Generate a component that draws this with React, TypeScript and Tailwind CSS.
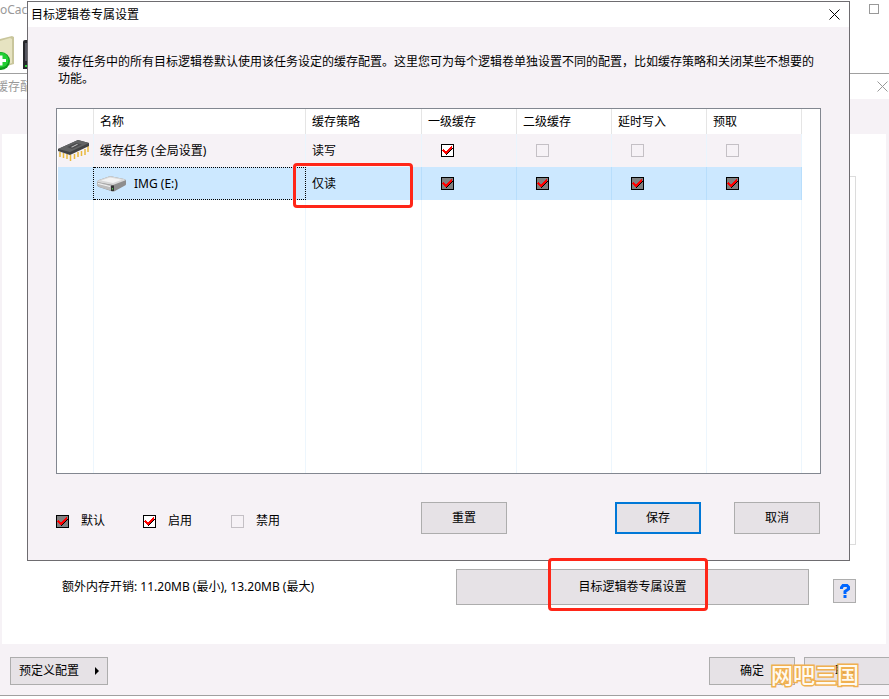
import React from "react";

type Mark = "default" | "on" | "off";

function Tick({ mark, label }: { mark: Mark; label: string }) {
  const look =
    mark === "default"
      ? "border-black bg-[#808080]"
      : mark === "on"
        ? "border-black bg-white"
        : "border-[#c4c0c5] bg-transparent";
  return (
    <span className="grid size-[13px] shrink-0">
      <input
        type="checkbox"
        aria-label={label}
        defaultChecked={mark !== "off"}
        className={"col-start-1 row-start-1 size-[13px] appearance-none border " + look}
      />
      {mark !== "off" && (
        <svg viewBox="0 0 13 13" shapeRendering="crispEdges" className="pointer-events-none col-start-1 row-start-1 size-[13px]">
          <path d="M2 6h1v1h1v1h1v1h1v-1h1v-1h1v-1h1v-1h1v-1h2v1h-1v1h-1v1h-1v1h-1v1h-1v1h-1v1h-1v-1h-1v-1h-1v-1h-1v-1h-1z" fill="#000" />
          <path d="M2 5h1v1h1v1h2v-1h1v-1h1v-1h1v-1h1v-1h1v3h-1v1h-1v1h-1v1h-1v1h-1v1h-2v-1h-1v-1h-1v-1h-1z" fill="#f00" />
        </svg>
      )}
    </span>
  );
}

function Chip() {
  return (
    <svg viewBox="0 0 32 22" className="h-[22px] w-8">
      <path d="M2 12v5M5.500 13v5M9 14v5M12.500 15v6M16.500 14v5M20 12v5M23.500 11v5M27 9v6M30 6v6" stroke="#e9b93c" strokeWidth="1.5" />
      <path d="M0 9 20 0l11 3v3L12 15 0 11z" fill="#414244" />
      <path d="M0 9 20 0l11 3-19 9z" fill="#626364" />
      <path d="m9 7 9-4 6 1.500L14 9z" fill="#4b4b4d" />
      <path d="m13 7 6-3 1 .5-6 3z" fill="#c5c5c5" />
    </svg>
  );
}

function Drive() {
  return (
    <svg viewBox="0 0 30 16" className="h-4 w-[30px]">
      <path d="M0 6q0-1 2-2L12 .5q1-.5 3 0l12 2.500q2 .5 2 2v3q0 1-1 1.500L18 15q-2 1-4 0L2 11q-2-1-2-2z" fill="#8d8d8d" />
      <path d="M0 6q0-1 2-2L12 .5q1-.5 3 0l12 2.500q2 .5 1 1.500L16 9z" fill="#d8d8d8" />
      <path d="M4 4.500 13 1.500l12 2.200L16 7z" fill="#f3f3f3" />
      <path d="M0 6l15 3.500V15L2 11Q0 10 0 9z" fill="#bdbdbd" />
      <path d="M1 7.500l12 3" stroke="#f4f4f4" />
      <path d="M14 9.500h3V15h-3z" fill="#333" />
      <path d="M15 12h1v1.500h-1z" fill="#4fd04f" />
    </svg>
  );
}

function Close({ className }: { className: string }) {
  return (
    <svg viewBox="0 0 11 11" className={"size-[11px] " + className} fill="none" stroke="currentColor">
      <path d="m.5.5 10 10M10.500.5l-10 10" />
    </svg>
  );
}

const btn = "border border-[#adadad] bg-[#e6e2e6] text-center";
const heads = ["名称", "缓存策略", "一级缓存", "二级缓存", "延时写入", "预取"];
const cols = ["一级缓存", "二级缓存", "延时写入", "预取"];
const globalMarks: Mark[] = ["on", "off", "off", "off"];
const legend: { mark: Mark; name: string; width: string }[] = [
  { mark: "default", name: "默认", width: "w-[87px]" },
  { mark: "on", name: "启用", width: "w-[88px]" },
  { mark: "off", name: "禁用", width: "w-[87px]" },
];

function VolumeTable() {
  return (
    <div className="flex h-[366px] border border-[#828790] bg-white pl-px">
      <table className="h-full w-[744px] table-fixed border-separate border-spacing-0 text-left">
        <colgroup>
          <col className="w-9" />
          <col className="w-[212px]" />
          <col className="w-[116px]" />
          <col className="w-[95px]" />
          <col className="w-[95px]" />
          <col className="w-[95px]" />
          <col className="w-[95px]" />
        </colgroup>
        <thead>
          <tr className="h-[25px]">
            <td className="border-r border-[#e5e5e5]" />
            {heads.map((h) => (
              <th key={h} scope="col" className="border-r border-[#e5e5e5] px-1.5 font-normal">{h}</th>
            ))}
          </tr>
        </thead>
        <tbody>
          <tr className="h-[33px] bg-[#f6f2f6]">
            <td className="border-r border-[#eaf5fd]"><Chip /></td>
            <td className="border-r border-[#eaf5fd] px-1.5">缓存任务 (全局设置)</td>
            <td className="border-r border-[#eaf5fd] px-1.5">读写</td>
            {cols.map((c, i) => (
              <td key={c} className="border-r border-[#eaf5fd] pl-[19px]">
                <Tick mark={globalMarks[i]} label={"缓存任务 " + c} />
              </td>
            ))}
          </tr>
          <tr className="h-[33px] bg-[#cce8ff]">
            <td className="border-r border-dotted border-black" />
            <td className="border border-l-0 border-dotted border-black px-[3px]">
              <span className="flex items-center gap-[7px]"><Drive />IMG (E:)</span>
            </td>
            <td className="relative border-r border-[#b8defc] px-1.5">
              仅读
              <span className="pointer-events-none absolute -top-1 -left-[13px] h-[45px] w-[120px] rounded-sm border-3 border-[#ff2618]" />
            </td>
            {cols.map((c) => (
              <td key={c} className="border-r border-[#b8defc] pl-[19px]">
                <Tick mark="default" label={"IMG (E:) " + c} />
              </td>
            ))}
          </tr>
          <tr>
            <td className="border-r border-[#edf6fd]" />
            {heads.map((h) => (
              <td key={h} className="border-r border-[#edf6fd]" />
            ))}
          </tr>
        </tbody>
      </table>
    </div>
  );
}

export default function App() {
  return (
    <div className="relative flex min-h-screen flex-col overflow-hidden bg-white font-['Noto_Sans','Noto_Sans_CJK_SC',sans-serif] text-xs text-black">
      <header className="flex h-[74px] justify-between border-b border-[#a0a0a0]">
        <div>
          <div className="h-9 pt-0.5 text-[#999]">oCac</div>
          <svg viewBox="0 0 30 36" className="h-9 w-[30px]">
            <path d="M0 3 12 0l2 1v27L0 32z" fill="#c9c69c" />
            <path d="M0 5 10 2l2 1v24L0 31z" fill="#e6e3c1" />
            <circle cx="1" cy="25" r="9" fill="#0f9a1c" />
            <circle cx="1" cy="24" r="7.500" fill="#22cf33" />
            <path d="M-4 24.500H6M1 19.500v10" stroke="#fff" strokeWidth="3" />
            <path d="M23 6q0-2 2-2h5v29h-7z" fill="#26272b" />
            <path d="M25 7h5v18h-5z" fill="#55565f" />
            <path d="M25 29h2v2h-2z" fill="#2fd03a" />
          </svg>
        </div>
        <button aria-label="最大化" className="mt-1 mr-[10px] size-[10px] border border-[#999]" />
      </header>
      <div className="flex h-[25px] items-center justify-between text-[#999]">
        <h2 className="-ml-1">缓存配置</h2>
        <button aria-label="关闭" className="mr-px"><Close className="text-[#999]" /></button>
      </div>
      <main className="flex flex-1 flex-col bg-[#f6f2f6] pt-[35px]">
        <section className="mr-[3px] ml-[2px] flex flex-1 flex-col bg-white pt-[42px]">
          <div className="mr-[30px] ml-[28px] flex-1 border border-[#dcdcdc]" />
          <div className="flex h-[99px] items-start pt-6 pr-[30px] pl-[60px]">
            <p className="mt-2.5 flex-1">额外内存开销: 11.20MB (最小), 13.20MB (最大)</p>
            <button className={btn + " h-9 w-[353px]"}>目标逻辑卷专属设置</button>
            <button aria-label="帮助" className={btn + " mt-2.5 ml-6 flex h-6 w-[23px] items-center justify-center"}>
              <svg viewBox="0 0 10 14" className="h-3.5 w-2.5" fill="none" stroke="#0066ff" strokeWidth="3">
                <path d="M1.500 5V3.500l1.500-2h4L8.500 3v2L5 7.500V10M5 11v3" />
              </svg>
            </button>
          </div>
        </section>
        <footer className="flex h-[52px] items-center justify-between border-b border-[#a0a0a0] pt-0.5 pl-[10px]">
          <button className={btn + " flex h-7 w-[98px] items-center justify-between px-2"}>
            预定义配置
            <svg viewBox="0 0 4 8" className="h-2 w-1"><path d="m0 0 4 4-4 4z" /></svg>
          </button>
          <div className="-mr-px flex gap-[9px]">
            <button className={btn + " h-7 w-[86px]"}>确定</button>
            <button className={btn + " h-7 w-[86px]"}>取消</button>
          </div>
        </footer>
      </main>
      <div className="h-[3px]" />

      <div role="dialog" aria-label="目标逻辑卷专属设置" className="absolute top-px right-[39px] left-[27px] border border-[#6e6c70] bg-[#f6f2f6]">
        <div className="flex h-[25px] items-center justify-between bg-white pr-[9px] pl-[3px]">
          <h1>目标逻辑卷专属设置</h1>
          <button aria-label="关闭"><Close className="text-black" /></button>
        </div>
        <div className="px-7 pt-[26px] pb-[26px]">
          <p className="mb-[21px] pl-0.5 leading-[17px]">
            缓存任务中的所有目标逻辑卷默认使用该任务设定的缓存配置。这里您可为每个逻辑卷单独设置不同的配置，比如缓存策略和关闭某些不想要的功能。
          </p>
          <VolumeTable />
          <div className="mt-7 flex h-8 items-center pr-px">
            {legend.map((l) => (
              <label key={l.name} className={"flex items-center gap-3 pt-1.5 " + l.width}>
                <Tick mark={l.mark} label={l.name} />
                {l.name}
              </label>
            ))}
            <div className="flex flex-1 justify-end">
              <button className={btn + " mr-[108px] h-8 w-[86px]"}>重置</button>
              <button className="mr-[33px] h-8 w-[86px] border-2 border-[#0078d7] bg-[#e6e2e6]">保存</button>
              <button className={btn + " h-8 w-[86px]"}>取消</button>
            </div>
          </div>
        </div>
      </div>

      <div className="pointer-events-none absolute top-[558px] right-[181px] h-[53px] w-[160px] rounded-sm border-3 border-[#ff2618]" />
      <div className="pointer-events-none absolute right-[30px] bottom-[9px] text-[22px] leading-8 font-medium text-[#fffaf0] [-webkit-text-stroke:3px_#f0b050] [paint-order:stroke_fill]">
        网吧三国
      </div>
    </div>
  );
}
